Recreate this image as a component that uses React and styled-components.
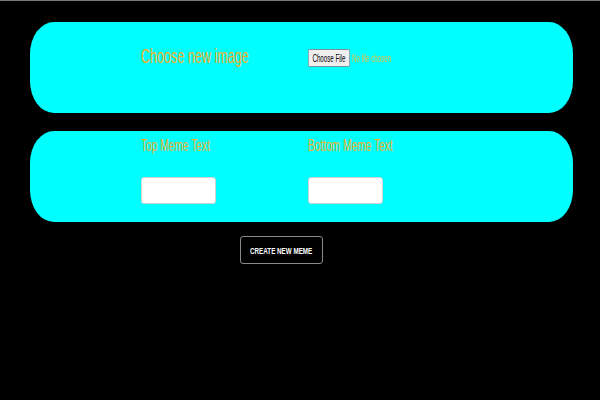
import React from "react";
import styled, { createGlobalStyle } from "styled-components";

const GlobalStyle = createGlobalStyle`
  html, body {
    margin: 0;
    padding: 0;
    background: #000;
    font-family: "Liberation Sans", Arial, sans-serif;
  }
`;

const Page = styled.div`
  min-height: 400px;
  box-sizing: border-box;
  border-top: 1px solid #777;
  padding: 21px 27px 0 30px;
  display: flex;
  flex-direction: column;
  align-items: stretch;
`;

const Card = styled.div`
  height: 91px;
  background: #00ffff;
  border-radius: 24px / 32px;
  box-sizing: border-box;
  padding: ${(p) => p.$pad};
  display: flex;
  align-items: ${(p) => p.$align || "flex-start"};
  margin-bottom: 18px;
`;

const Column = styled.div`
  width: 167px;
  display: flex;
  flex-direction: column;
  align-items: flex-start;
`;

const Squeeze = styled.span`
  display: inline-block;
  white-space: nowrap;
  transform: scaleX(${(p) => p.$x || 0.6});
  transform-origin: ${(p) => p.$origin || "left center"};
`;

const Title = styled.div`
  color: #f2b12a;
  font-size: ${(p) => p.$size}px;
  line-height: ${(p) => p.$size + 3}px;
`;

const FileInput = styled.input`
  font-family: "Liberation Sans", Arial, sans-serif;
  font-size: 11px;
  color: #e6c24a;
  width: 200px;
`;

const TextBox = styled.input`
  width: 75px;
  height: 27px;
  box-sizing: border-box;
  border: 1px solid #d0d0d0;
  border-radius: 3px;
  background: #fff;
  margin-top: 21px;
  padding: 0 4px;
  outline: none;
`;

const Actions = styled.div`
  display: flex;
  justify-content: flex-start;
  margin-top: -4px;
  padding-left: 210px;
`;

const Button = styled.button`
  width: 83px;
  height: 28px;
  background: #000;
  color: #fff;
  border: 1px solid #8a8a8a;
  border-radius: 3px;
  font-family: "Liberation Sans", Arial, sans-serif;
  font-weight: bold;
  font-size: 9.5px;
  padding: 0;
  display: flex;
  align-items: center;
  justify-content: center;
  cursor: pointer;
`;

export default function App() {
  return (
    <>
      <GlobalStyle />
      <Page>
        <Card $pad="0 0 0 111px" $align="center">
          <Column>
            <Title $size={21} style={{ marginTop: -24 }}>
              <Squeeze>Choose new image</Squeeze>
            </Title>
          </Column>
          <Column style={{ marginTop: -20 }}>
            <Squeeze $x={0.56}>
              <FileInput type="file" />
            </Squeeze>
          </Column>
        </Card>
        <Card $pad="5px 0 0 111px">
          <Column>
            <Title $size={17}>
              <Squeeze>Top Meme Text</Squeeze>
            </Title>
            <TextBox type="text" />
          </Column>
          <Column>
            <Title $size={17}>
              <Squeeze>Bottom Meme Text</Squeeze>
            </Title>
            <TextBox type="text" />
          </Column>
        </Card>
        <Actions>
          <Button>
            <Squeeze $x={0.66} $origin="center">CREATE NEW MEME</Squeeze>
          </Button>
        </Actions>
      </Page>
    </>
  );
}
